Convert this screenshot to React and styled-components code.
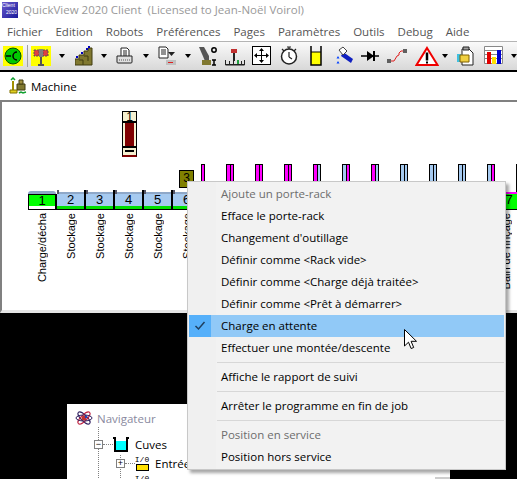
import React from "react";
import styled, { createGlobalStyle } from "styled-components";

const GlobalStyle = createGlobalStyle`
  html, body { margin: 0; padding: 0; background: #000; }
  body { font-family: "Open Sans", "Noto Sans", sans-serif; }
`;

const menuLabels = ["Fichier", "Edition", "Robots", "Préférences", "Pages", "Paramètres", "Outils", "Debug", "Aide"];

const PINK = "#ff00ff";
const BLUE = "#a6caf0";
const SLATE = "#8fa8c8";
const rackBars = [
  [PINK, PINK], [PINK, PINK], [PINK, PINK], [PINK, BLUE], [BLUE, PINK],
  [PINK, BLUE], [BLUE, BLUE], [BLUE, BLUE], [BLUE, BLUE], [BLUE, PINK], [BLUE, BLUE],
];

// stations 7 to 16 sit behind the context menu, so only their frames are drawn
const stations = [
  { num: 1, label: "Charge/décha", fill: "#00ff00", base: "#fff", first: true },
  { num: 2, label: "Stockage" },
  { num: 3, label: "Stockage" },
  { num: 4, label: "Stockage" },
  { num: 5, label: "Stockage" },
  { num: 6, label: "Stockage" },
  { id: 7 }, { id: 8 }, { id: 9 }, { id: 10 }, { id: 11 },
  { id: 12 }, { id: 13 }, { id: 14 }, { id: 15 }, { id: 16 },
  { num: 17, label: "Bain de rinçage", fill: "#00ff00", base: "#00ff00", last: true },
];

const contextItems = [
  { label: "Ajoute un porte-rack", disabled: true },
  { label: "Efface le porte-rack" },
  { label: "Changement d'outillage" },
  { label: "Définir comme <Rack vide>" },
  { label: "Définir comme <Charge déjà traitée>" },
  { label: "Définir comme <Prêt à démarrer>" },
  { label: "Charge en attente", checked: true },
  { label: "Effectuer une montée/descente" },
  { separator: true },
  { label: "Affiche le rapport de suivi" },
  { separator: true },
  { label: "Arrêter le programme en fin de job" },
  { separator: true },
  { label: "Position en service", disabled: true },
  { label: "Position hors service" },
];

const Icon = ({ w = 20, h = 20, children }) => (
  <svg width={w} height={h} viewBox={`0 0 ${w} ${h}`} style={{ display: "block" }}>
    {children}
  </svg>
);

const toolbarItems = [
  { w: 20, ml: 3, icon: (
    <Icon>
      <rect width="20" height="20" fill="#ffff00" />
      <circle cx="10" cy="10" r="8" fill="#00c800" stroke="#005000" />
      <path d="M3 10h4M14 6a4 4 0 1 0 0 8M7 10h1" fill="none" stroke="#000" strokeWidth="1.500" />
    </Icon>
  ) },
  { separator: true },
  { w: 20, ml: 3, icon: (
    <Icon>
      <rect width="20" height="20" fill="#ffff00" />
      <rect x="3" y="4" width="5" height="6" fill="#e04040" stroke="#555" strokeDasharray="2 1" />
      <rect x="12" y="4" width="5" height="6" fill="#e04040" stroke="#555" strokeDasharray="2 1" />
      <rect x="8" y="3" width="4" height="8" fill="#808080" />
      <path d="M10 11v8M7 19h6" stroke="#555" strokeWidth="2" />
    </Icon>
  ) },
  { arrow: true, ml: 8 },
  { w: 18, ml: 10, icon: (
    <Icon w={18}>
      <path d="M0 19v-6h4V9h5V5h4V2h4v17z" fill="#807830" stroke="#403c10" />
      <path d="M4 14h4v5M9 10h4v5" fill="none" stroke="#403c10" />
      <path d="M1 11h2M6 7h2M11 3h2M14 0v2" stroke="#0000c0" strokeWidth="2" />
    </Icon>
  ) },
  { arrow: true, ml: 8 },
  { w: 17, ml: 9, icon: (
    <Icon w={17}>
      <path d="M5 2h6l2 2v7H5z" fill="#fff" stroke="#222" />
      <path d="M7 5h4M7 7h4M7 9h4" stroke="#222" />
      <path d="M1 10h15v6a1 1 0 0 1-1 1H2a1 1 0 0 1-1-1z" fill="#e0e0e0" stroke="#222" />
      <path d="M3 14h11" stroke="#555" strokeDasharray="1 1" />
    </Icon>
  ) },
  { arrow: true, ml: 10 },
  { w: 18, ml: 9, icon: (
    <Icon w={18}>
      <path d="M1 1h7l2 2v9H1z" fill="#fff" stroke="#222" />
      <path d="M3 4h5M3 6h5M3 8h5" stroke="#222" />
      <path d="M10 6h7l-3.500 4z" fill="#222" />
      <rect x="8" y="14" width="10" height="5" fill="#c0c0c0" />
      <rect x="10" y="16" width="5" height="1" fill="#e02020" />
    </Icon>
  ) },
  { arrow: true, ml: 9 },
  { w: 18, ml: 8, icon: (
    <Icon w={18}>
      <path d="M0 1h5l5 9v5H6z" fill="#555" />
      <rect x="3" y="14" width="9" height="5" fill="#807830" />
      <circle cx="15" cy="4" r="2.200" fill="none" stroke="#000" strokeWidth="1.500" />
      <path d="M13 14h4M15 14v5M13 19h4" stroke="#000" strokeWidth="1.500" />
    </Icon>
  ) },
  { w: 20, ml: 8, icon: (
    <Icon>
      <rect x="6" y="3" width="6" height="4" fill="#c03030" />
      <path d="M9 7v8" stroke="#222" strokeWidth="2" />
      <path d="M0.500 14v5h19v-5M4.500 15v4M8.500 15v4M12.500 15v4M16.500 15v4M0.500 18.500h19" fill="none" stroke="#222" />
      <rect x="12" y="14" width="2" height="4" fill="#20a040" />
    </Icon>
  ) },
  { w: 19, ml: 7, icon: (
    <Icon w={19}>
      <rect x="0.500" y="0.500" width="18" height="18" fill="#fff" stroke="#000" />
      <path d="M9.500 3v13M3 9.500h13" stroke="#000" />
      <path d="M9.500 2l-2.500 3h5zM9.500 17l-2.500-3h5zM2 9.500l3-2.500v5zM17 9.500l-3-2.500v5z" fill="#000" />
    </Icon>
  ) },
  { w: 18, ml: 9, icon: (
    <Icon w={18}>
      <circle cx="9" cy="10.500" r="7.500" fill="#fff" stroke="#222" strokeWidth="1.500" />
      <path d="M7 1h4M9 1v2M9 11V6M9 11l3 2M2 3l2 2M16 3l-2 2" stroke="#222" strokeWidth="1.200" />
    </Icon>
  ) },
  { w: 12, ml: 12, icon: (
    <Icon w={12}>
      <path d="M1 6h10v13H1z" fill="#ffff00" />
      <path d="M1 0v19h10V0" fill="none" stroke="#000" strokeWidth="1.500" />
      <path d="M1 6h10" stroke="#000" />
    </Icon>
  ) },
  { w: 17, ml: 14, icon: (
    <Icon w={17}>
      <path d="M7 6l10 7-2 4-10-7z" fill="#1020c0" />
      <path d="M3 4l4-3 4 4-4 4z" fill="#fff" stroke="#444" />
      <path d="M1 10l1.500 2.500h-3zM1 15l1.500 2.500h-3z" transform="translate(1 0)" fill="#0040ff" />
    </Icon>
  ) },
  { w: 18, ml: 8, icon: (
    <Icon w={18}>
      <path d="M0 10h18" stroke="#000" strokeWidth="1.500" />
      <path d="M6 5l7 5-7 5z" fill="#000" />
      <path d="M13 5v10" stroke="#000" strokeWidth="2" />
    </Icon>
  ) },
  { w: 20, ml: 8, icon: (
    <Icon>
      <path d="M3 15h4l3-5 2-1v-2l2-2h4" fill="none" stroke="#e02020" />
      <rect y="13" width="4" height="4" fill="#606060" />
      <rect x="16" y="3" width="4" height="4" fill="#606060" />
    </Icon>
  ) },
  { w: 24, ml: 8, icon: (
    <Icon w={24}>
      <path d="M12 2l10.500 17h-21z" fill="#fff" stroke="#f00000" strokeWidth="2" />
      <path d="M12 6.500v8" stroke="#000" strokeWidth="2.500" />
      <path d="M12 15.500v2" stroke="#000" strokeWidth="2" />
    </Icon>
  ) },
  { arrow: true, ml: 3 },
  { w: 17, ml: 9, icon: (
    <Icon w={17}>
      <path d="M5 3h7l4 4v12H5z" fill="#fff" stroke="#222" />
      <path d="M6 1h6v3H6z" fill="#a0a0a0" stroke="#222" />
      <rect y="8" width="4" height="8" fill="#40c0e0" />
      <path d="M3 9h9v7H3z" fill="#f0d040" stroke="#806000" />
    </Icon>
  ) },
  { w: 19, ml: 10, icon: (
    <Icon w={19}>
      <path d="M0.500 0.500h18v17H0.500zM0 4.500h19M0 8.500h19M0 12.500h19" fill="#fff" stroke="#888" />
      <rect x="3" y="6" width="4" height="12" fill="#e00000" />
      <rect x="8" y="11" width="4" height="7" fill="#ffe000" />
      <rect x="13" y="4" width="4" height="14" fill="#0000d0" />
    </Icon>
  ) },
  { arrow: true, ml: 8 },
];

export default function App() {
  return (
    <>
      <GlobalStyle />
      <Screen>
        <TitleBar>
          <AppLogo>
            <span>Client</span>
            <span>2020</span>
          </AppLogo>
          <TitleText>QuickView 2020 Client&nbsp; (Licensed to Jean-Noël Voirol)</TitleText>
        </TitleBar>
        <MenuBar>
          {menuLabels.map((label) => (
            <MenuLabel key={label}>{label}</MenuLabel>
          ))}
        </MenuBar>
        <Toolbar>
          {toolbarItems.map((item, i) => {
            if (item.separator) return <ToolSeparator key={i} />;
            if (item.arrow) return <ToolArrow key={i} $ml={item.ml} />;
            return (
              <ToolIcon key={i} $ml={item.ml} $w={item.w}>
                {item.icon}
              </ToolIcon>
            );
          })}
        </Toolbar>
        <WindowHeader>
          <svg width="18" height="18" viewBox="0 0 18 18">
            <path d="M8 7h8v6H8z" fill="#807830" stroke="#403c10" />
            <path d="M10 3h4v4h-4z" fill="#a09040" stroke="#403c10" />
            <path d="M4 4v9" stroke="#a09000" strokeWidth="2" />
            <path d="M1 13h7v3H1z" fill="#e0d020" stroke="#807000" />
            <path d="M2 3l2-2 2 2M10 16l2-1 2 1 3-1" stroke="#10a030" strokeWidth="1.500" fill="none" />
          </svg>
          <span>Machine</span>
        </WindowHeader>
        <Canvas>
          <CarrierRack>
            <RackHead>1</RackHead>
            <RackBody />
            <RackFoot>
              <i />
            </RackFoot>
          </CarrierRack>
          <Marker>3</Marker>
          <BarRow>
            <RackBar $halves={[PINK]} />
            {rackBars.map((halves, i) => (
              <RackBar key={i} $halves={halves} />
            ))}
          </BarRow>
          <StationRow>
            {stations.map((s) => (
              <Station key={s.num || s.id}>
                <StationCap $first={s.first} $last={s.last} />
                <StationCell $fill={s.fill} $first={s.first}>{s.num}</StationCell>
                <StationBase $fill={s.base} $first={s.first} />
                {s.label && <StationLabel>{s.label}</StationLabel>}
              </Station>
            ))}
          </StationRow>
        </Canvas>
        <Desktop>
          <Navigator>
            <NavTitle>
              <svg width="18" height="18" viewBox="0 0 18 18" fill="none">
                <ellipse cx="9" cy="9" rx="8" ry="3" stroke="#302060" transform="rotate(45 9 9)" />
                <ellipse cx="9" cy="9" rx="8" ry="3" stroke="#c02040" transform="rotate(-45 9 9)" />
                <ellipse cx="9" cy="9" rx="8" ry="3" stroke="#302060" />
                <circle cx="9" cy="9" r="2.500" fill="#c03030" />
                <circle cx="11" cy="8" r="1.200" fill="#2040c0" />
              </svg>
              <span>Navigateur</span>
            </NavTitle>
            <TreeBody>
              <TreeRow>
                <TreeToggle>−</TreeToggle>
                <TreeDots />
                <svg width="16" height="15" viewBox="0 0 16 15">
                  <path d="M2 4h12v10H2z" fill="#00ffff" />
                  <path d="M2 0v14h12V0M0 1h3M13 1h3" fill="none" stroke="#000" strokeWidth="2" />
                </svg>
                <TreeText>Cuves</TreeText>
              </TreeRow>
              <TreeRow $nested>
                <TreeToggle>+</TreeToggle>
                <TreeDots />
                <IoIcon>
                  <span>I/0</span>
                  <i />
                </IoIcon>
                <TreeText>Entrées</TreeText>
              </TreeRow>
              <TreeRow $nested>
                <TreeGap />
                <TreeDots />
                <IoIcon>
                  <span>I/0</span>
                  <i />
                </IoIcon>
              </TreeRow>
            </TreeBody>
            <ScrollStub />
          </Navigator>
        </Desktop>

        <ContextMenu>
          {contextItems.map((item, i) =>
            item.separator ? (
              <MenuSeparator key={i} />
            ) : (
              <MenuItem key={i} $disabled={item.disabled} $checked={item.checked}>
                <CheckCell $checked={item.checked}>
                  {item.checked && (
                    <svg width="12" height="10" viewBox="0 0 12 10" fill="none">
                      <path d="M1.500 5l3 3 6-7" stroke="#1f3f5f" strokeWidth="1.500" />
                    </svg>
                  )}
                </CheckCell>
                <span>{item.label}</span>
              </MenuItem>
            )
          )}
        </ContextMenu>
        <Pointer width="13" height="21" viewBox="0 0 13 21">
          <path d="M0.500 0.500v16.500l4-3.800 2.600 6.300 2.600-1-2.600-6.200h5.400z" fill="#fff" stroke="#000" />
        </Pointer>
      </Screen>
    </>
  );
}

const Screen = styled.div`
  position: relative;
  width: 517px;
  height: 479px;
  overflow: hidden;
  display: flex;
  flex-direction: column;
  background: #000;
`;

const TitleBar = styled.div`
  height: 22px;
  flex: none;
  box-sizing: border-box;
  display: flex;
  align-items: center;
  gap: 5px;
  padding: 0 0 3px 2px;
  background: #fff;
`;

const AppLogo = styled.div`
  width: 16px;
  height: 16px;
  display: flex;
  flex-direction: column;
  font: 5px/7px "Liberation Sans", sans-serif;
  color: #fff;
  background: linear-gradient(135deg, #6a5acd, #1a1a9a);
  span:last-child { padding-left: 4px; }
`;

const TitleText = styled.span`
  font-size: 11.500px;
  white-space: pre;
  color: #999;
`;

const MenuBar = styled.div`
  height: 19px;
  flex: none;
  display: flex;
  align-items: center;
  padding-left: 7px;
  gap: 13px;
  background: #fff;
  border-bottom: 1px solid #b4b4b4;
`;

const MenuLabel = styled.span`
  font-size: 11.500px;
  color: #555;
`;

const Toolbar = styled.div`
  height: 28px;
  flex: none;
  display: flex;
  align-items: center;
  overflow: hidden;
  background: linear-gradient(#fafafa, #d8d8d8);
  border-bottom: 2px solid #000;
`;

const ToolIcon = styled.div`
  width: ${(p) => p.$w}px;
  flex: none;
  margin-left: ${(p) => p.$ml}px;
`;

const ToolSeparator = styled.div`
  width: 1px;
  height: 22px;
  flex: none;
  margin-left: 4px;
  background: #a0a0a0;
`;

const ToolArrow = styled.div`
  flex: none;
  margin-left: ${(p) => p.$ml}px;
  width: 0;
  height: 0;
  border-left: 3.500px solid transparent;
  border-right: 3.500px solid transparent;
  border-top: 4px solid #000;
`;

const WindowHeader = styled.div`
  height: 28px;
  flex: none;
  display: flex;
  align-items: center;
  gap: 4px;
  padding-left: 9px;
  background: #fff;
  font-size: 11.500px;
  color: #000;
`;

const Canvas = styled.div`
  position: relative;
  height: 213px;
  flex: none;
  box-sizing: border-box;
  overflow: hidden;
  background: #fff;
  border-top: 2px solid #808080;
  border-left: 2px solid #808080;
  border-bottom: 3px solid #e4e4e4;
`;

const CarrierRack = styled.div`
  position: absolute;
  left: 120px;
  top: 9px;
  width: 15px;
  height: 46px;
  display: flex;
  flex-direction: column;
`;

const RackHead = styled.div`
  height: 11px;
  box-sizing: border-box;
  border: 1px solid #000;
  background: #f5f0d0;
  font: 12px/10px "Liberation Sans", sans-serif;
  text-align: center;
`;

const RackBody = styled.div`
  flex: 1;
  background: #800000;
  border-left: 3px solid #f5f0d0;
  border-right: 3px solid #f5f0d0;
  outline: 1px solid #000;
  outline-offset: -1px;
`;

const RackFoot = styled.div`
  height: 10px;
  box-sizing: border-box;
  padding: 2px 2px 3px;
  background: #f5f0d0;
  border: 1px solid #000;
  border-bottom: 2px solid #800000;
  i {
    display: block;
    height: 100%;
    box-sizing: border-box;
    border: 1px solid #000;
  }
`;

const Marker = styled.div`
  position: absolute;
  left: 177px;
  top: 68px;
  width: 15px;
  height: 18px;
  box-sizing: border-box;
  border: 1px solid #000;
  background: #808000;
  font: 12px/14px "Liberation Sans", sans-serif;
  text-align: center;
`;

const BarRow = styled.div`
  position: absolute;
  left: 199px;
  top: 62px;
  display: flex;
  gap: 21px;
`;

const RackBar = styled.div`
  flex: none;
  height: 30px;
  box-sizing: border-box;
  width: ${(p) => (p.$halves.length === 1 ? 4 : 8)}px;
  border: 1px solid #000;
  background: linear-gradient(
    to right,
    ${(p) => p.$halves[0]} 0 3px,
    #000 3px 4px,
    ${(p) => p.$halves[1] || p.$halves[0]} 4px
  );
`;

const StationRow = styled.div`
  position: absolute;
  left: 26px;
  top: 88px;
  display: flex;
`;

const Station = styled.div`
  flex: none;
  width: 29px;
  display: flex;
  flex-direction: column;
  align-items: center;
`;

const StationCap = styled.div`
  align-self: stretch;
  box-sizing: border-box;
  ${(p) =>
    p.$first
      ? `height: 3px; margin: 1px 1px 0 0; background: ${SLATE}; border-radius: 4px 4px 0 0;`
      : p.$last
      ? `height: 2px; margin-top: 2px; background: ${PINK};`
      : `height: 4px;
         border-left: 2px solid #556;
         border-right: 2px solid #000;
         background: linear-gradient(${SLATE}, ${SLATE}) no-repeat bottom / 100% 2px;`}
`;

const StationCell = styled.div`
  align-self: stretch;
  height: 12px;
  box-sizing: border-box;
  background: ${(p) => p.$fill || BLUE};
  border-top: ${(p) => (p.$first ? "1px solid #000" : "none")};
  border-right: 2px solid #000;
  border-left: ${(p) => (p.$first ? "1px solid #000" : "none")};
  font: 13px/12px "Liberation Sans", sans-serif;
  text-align: center;
  color: #000;
`;

const StationBase = styled.div`
  align-self: stretch;
  height: 4px;
  box-sizing: border-box;
  background: ${(p) => p.$fill || "#00e000"};
  border-right: 2px solid #000;
  border-left: ${(p) => (p.$first ? "1px solid #000" : "none")};
  border-bottom: 1px solid #000;
`;

const StationLabel = styled.div`
  margin: 3px 1px 0 0;
  writing-mode: vertical-rl;
  transform: rotate(180deg);
  font: 11px/14px "Liberation Sans", sans-serif;
  white-space: nowrap;
  color: #000;
`;

const Desktop = styled.div`
  position: relative;
  flex: 1;
  background: #000;
`;

const Navigator = styled.div`
  position: absolute;
  left: 67px;
  top: 91px;
  width: 383px;
  height: 80px;
  overflow: hidden;
  background: #fff;
`;

const NavTitle = styled.div`
  display: flex;
  align-items: center;
  gap: 4px;
  padding: 5px 0 0 8px;
  font-size: 11.500px;
  color: #8a8aa0;
`;

const dotted = "repeating-linear-gradient(#808080 0 1px, transparent 1px 2px)";

const TreeBody = styled.div`
  display: flex;
  flex-direction: column;
  gap: 4px;
  padding: 10px 0 0 27px;
  background:
    ${dotted} no-repeat 31px 0 / 1px 100%,
    ${dotted} no-repeat 53px 28px / 1px 100%;
`;

const TreeRow = styled.div`
  display: flex;
  align-items: center;
  height: 15px;
  padding-left: ${(p) => (p.$nested ? 22 : 0)}px;
`;

const TreeToggle = styled.div`
  width: 9px;
  height: 9px;
  flex: none;
  box-sizing: border-box;
  border: 1px solid #808080;
  background: #fff;
  font: 9px/7px "Liberation Sans", sans-serif;
  text-align: center;
  color: #000;
`;

const TreeGap = styled.div`
  width: 9px;
  flex: none;
`;

const TreeDots = styled.div`
  width: 10px;
  flex: none;
  border-top: 1px dotted #808080;
`;

const TreeText = styled.span`
  margin-left: 6px;
  font-size: 11.500px;
  color: #000;
`;

const IoIcon = styled.div`
  width: 14px;
  flex: none;
  display: flex;
  flex-direction: column;
  align-items: center;
  font: 8px/8px "Liberation Mono", monospace;
  color: #000;
  i {
    display: block;
    width: 13px;
    height: 7px;
    box-sizing: border-box;
    border: 1px solid #000;
    background: #ffe000;
  }
`;

const ScrollStub = styled.div`
  position: absolute;
  right: 0;
  bottom: 0;
  width: 15px;
  height: 7px;
  background: #cdcdcd;
`;

const ContextMenu = styled.div`
  position: absolute;
  left: 187px;
  top: 181px;
  width: 319px;
  height: 289px;
  box-sizing: border-box;
  padding: 1px;
  background: linear-gradient(to right, #f0f0f0 28px, #f2f2f2 28px);
  border: 1px solid #c8c8c8;
  box-shadow: 3px 3px 3px rgba(0, 0, 0, 0.35);
`;

const MenuItem = styled.div`
  display: flex;
  align-items: center;
  height: 22px;
  font-size: 11.500px;
  white-space: pre;
  color: ${(p) => (p.$disabled ? "#6d6d6d" : "#000")};
  background: ${(p) => (p.$checked ? "#91c9f7" : "transparent")};
  span { margin-top: -2px; }
`;

const CheckCell = styled.div`
  width: 22px;
  height: 22px;
  flex: none;
  margin-right: 10px;
  display: flex;
  align-items: center;
  justify-content: center;
  background: ${(p) => (p.$checked ? "#56b0fa" : "transparent")};
`;

const MenuSeparator = styled.div`
  height: 1px;
  margin: 3px 0 3px 28px;
  background: #d7d7d7;
`;

const Pointer = styled.svg`
  position: absolute;
  left: 404px;
  top: 329px;
`;
